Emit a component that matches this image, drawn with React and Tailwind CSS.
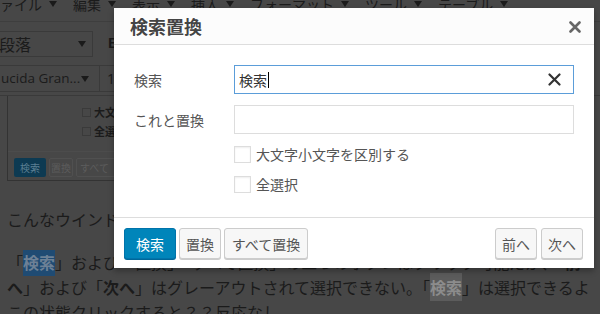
import React from "react";

const menus = ["ファイル", "編集", "表示", "挿入", "フォーマット", "ツール", "テーブル"];

const Caret = ({ className = "" }) => (
  <span className={`inline-block w-0 h-0 border-l-[4px] border-r-[4px] border-t-[6px] border-l-transparent border-r-transparent border-t-[#1a1a1a] ${className}`} />
);

// Editor behind the dialog, already dimmed by the overlay
const EditorBackdrop = () => (
  <div className="flex flex-col text-[#1b1b1b]">
    {/* menu bar */}
    <div className="h-[22px] border-b border-[#3e3e3e] overflow-hidden">
      <div className="flex items-center -mt-[3px] -ml-[14px] text-[14px] leading-[14px]">
        {menus.map((m) => (
          <div key={m} className="flex items-center mr-[16px]">
            <span>{m}</span>
            <Caret className="ml-[7px]" />
          </div>
        ))}
      </div>
    </div>

    {/* toolbar row 1 */}
    <div className="flex items-center h-[40px] pt-[3px]">
      <div className="-ml-[10px] w-[103px] h-[26px] border border-[#3a3a3a] flex items-center justify-between pl-[8px] pr-[6px] text-[16px]">
        <span>段落</span>
        <Caret />
      </div>
      <span className="ml-[15px] text-[15px] font-bold font-['Liberation_Sans',sans-serif]">B</span>
    </div>

    {/* toolbar row 2 */}
    <div className="flex items-center h-[34px] border-b border-[#3a3a3a]">
      <div className="-ml-[10px] w-[110px] h-[27px] border border-[#3a3a3a] flex items-center justify-between pl-[10px] pr-[10px] text-[14px] font-['Open_Sans',sans-serif] whitespace-nowrap overflow-hidden">
        <span className="text-[13.5px]">ucida Gran...</span>
        <Caret />
      </div>
      <div className="w-[40px] h-[27px] border border-[#3a3a3a] border-l-0 flex items-center pl-[7px] text-[14px] font-['Open_Sans',sans-serif]">
        <span>1</span>
      </div>
    </div>

    {/* content */}
    <div className="pl-[7px]">
      {/* screenshot image in the post, mostly hidden by the dialog */}
      <div className="w-[107px] h-[85px] border-l border-b border-[#333333] flex flex-col overflow-hidden">
        <div className="flex flex-col gap-[7px] pl-[74px] pt-[10px] text-[11px] leading-[12px] font-bold whitespace-nowrap">
          <div className="flex items-center gap-[3px]">
            <span className="shrink-0 w-[9px] h-[9px] border border-[#3a3a3a]" />
            <span>大文</span>
          </div>
          <div className="flex items-center gap-[3px]">
            <span className="shrink-0 w-[9px] h-[9px] border border-[#3a3a3a]" />
            <span>全選</span>
          </div>
        </div>
        <div className="mt-[14px] border-t border-[#4c4c4c] flex gap-[3px] pl-[6px] pt-[6px] text-[10px] whitespace-nowrap">
          <span className="shrink-0 w-[32px] h-[19px] rounded-[2px] bg-[#0d3a52] text-[#5b7f93] flex items-center justify-center">検索</span>
          <span className="shrink-0 w-[24px] h-[19px] rounded-[2px] border border-[#505050] text-[#5c5c5c] flex items-center justify-center">置換</span>
          <span className="shrink-0 w-[60px] h-[19px] rounded-[2px] border border-[#505050] text-[#5c5c5c] flex items-center pl-[3px]">すべて</span>
        </div>
      </div>

      <p className="mt-[30px] w-[107px] overflow-hidden text-[16px] leading-[16px] whitespace-nowrap">こんなウインドウ</p>

      <div className="mt-[23px] text-[16px] leading-[25px] whitespace-nowrap overflow-hidden">
        <div>
          「<span className="font-bold bg-[#1f4b73] text-[#6d8196] py-[2px]">検索</span>」および「置換」「すべて置換」の三つのボタンはクリック可能だが、「<b>前</b>
        </div>
        <div>
          <b>へ</b>」および「<b>次へ</b>」はグレーアウトされて選択できない。「<span className="font-bold bg-[#5c5c5c] text-[#8c8c8c] py-[2px]">検索</span>」は選択できるよ
        </div>
        <div>この状態クリックすると？？反応なし</div>
      </div>
    </div>
  </div>
);

const Button = ({ primary, children, className = "" }) => (
  <button
    type="button"
    className={`h-[31px] rounded-[3px] border text-[14px] leading-none ${
      primary
        ? "bg-[#0085ba] border-[#0073aa] text-white shadow-[0_1px_0_#006799]"
        : "bg-[#f7f7f7] border-[#cccccc] text-[#555555] shadow-[0_1px_0_#cccccc]"
    } ${className}`}
  >
    {children}
  </button>
);

const Checkbox = ({ label }) => (
  <label className="flex items-center gap-[5px] h-[17px] text-[14px] leading-[17px] text-[#555555]">
    <span className="w-[17px] h-[17px] border border-[#dddddd] bg-white shadow-[inset_0_1px_2px_rgba(0,0,0,0.07)]" />
    <span>{label}</span>
  </label>
);

export default function App() {
  return (
    <div className="relative w-[600px] h-[314px] overflow-hidden bg-[#474747] font-['Noto_Sans_CJK_JP','Noto_Sans',sans-serif]">
      <EditorBackdrop />

      {/* search & replace dialog */}
      <div className="absolute left-[114px] top-[8px] w-[480px] bg-white shadow-[0_3px_6px_rgba(0,0,0,0.3)] flex flex-col">
        <div className="h-[37px] bg-[#fcfcfc] border-b border-[#dddddd] flex items-center justify-between pl-[16px] pr-[13px]">
          <span className="text-[18px] font-bold text-[#444444] leading-none">検索置換</span>
          <svg width="12" height="12" viewBox="0 0 12 12" className="mt-[1px]">
            <path d="M1.5 1.5l9 9M10.5 1.5l-9 9" stroke="#666666" strokeWidth="2.6" strokeLinecap="round" />
          </svg>
        </div>

        <div className="flex flex-col pl-[20px] pr-[20px] pt-[20px] pb-[24px]">
          <div className="flex items-center h-[29px]">
            <span className="w-[100px] text-[14px] leading-[20px] text-[#555555]">検索</span>
            <div className="flex-1 h-[29px] border border-[#5b9dd9] flex items-center justify-between pl-[4px] pr-[12px]">
              <span className="text-[14px] text-[#333333] leading-[16px] border-r border-[#000000] pr-[1px]">検索</span>
              <svg width="13" height="13" viewBox="0 0 13 13">
                <path d="M1.5 1.5l10 10M11.5 1.5l-10 10" stroke="#333333" strokeWidth="2.2" strokeLinecap="round" />
              </svg>
            </div>
          </div>
          <div className="flex items-center h-[29px] mt-[11px]">
            <span className="w-[100px] text-[14px] leading-[20px] text-[#555555]">これと置換</span>
            <div className="flex-1 h-[29px] border border-[#dddddd]" />
          </div>
          <div className="flex flex-col gap-[13px] mt-[12px] pl-[100px]">
            <Checkbox label="大文字小文字を区別する" />
            <Checkbox label="全選択" />
          </div>
        </div>

        <div className="border-t border-[#dddddd] flex items-center justify-between pl-[10px] pr-[11px] pt-[10px] pb-[9px]">
          <div className="flex gap-[3px]">
            <Button primary className="w-[52px]">検索</Button>
            <Button className="w-[42px]">置換</Button>
            <Button className="w-[84px]">すべて置換</Button>
          </div>
          <div className="flex gap-[4px]">
            <Button className="w-[42px]">前へ</Button>
            <Button className="w-[42px]">次へ</Button>
          </div>
        </div>
      </div>
    </div>
  );
}
